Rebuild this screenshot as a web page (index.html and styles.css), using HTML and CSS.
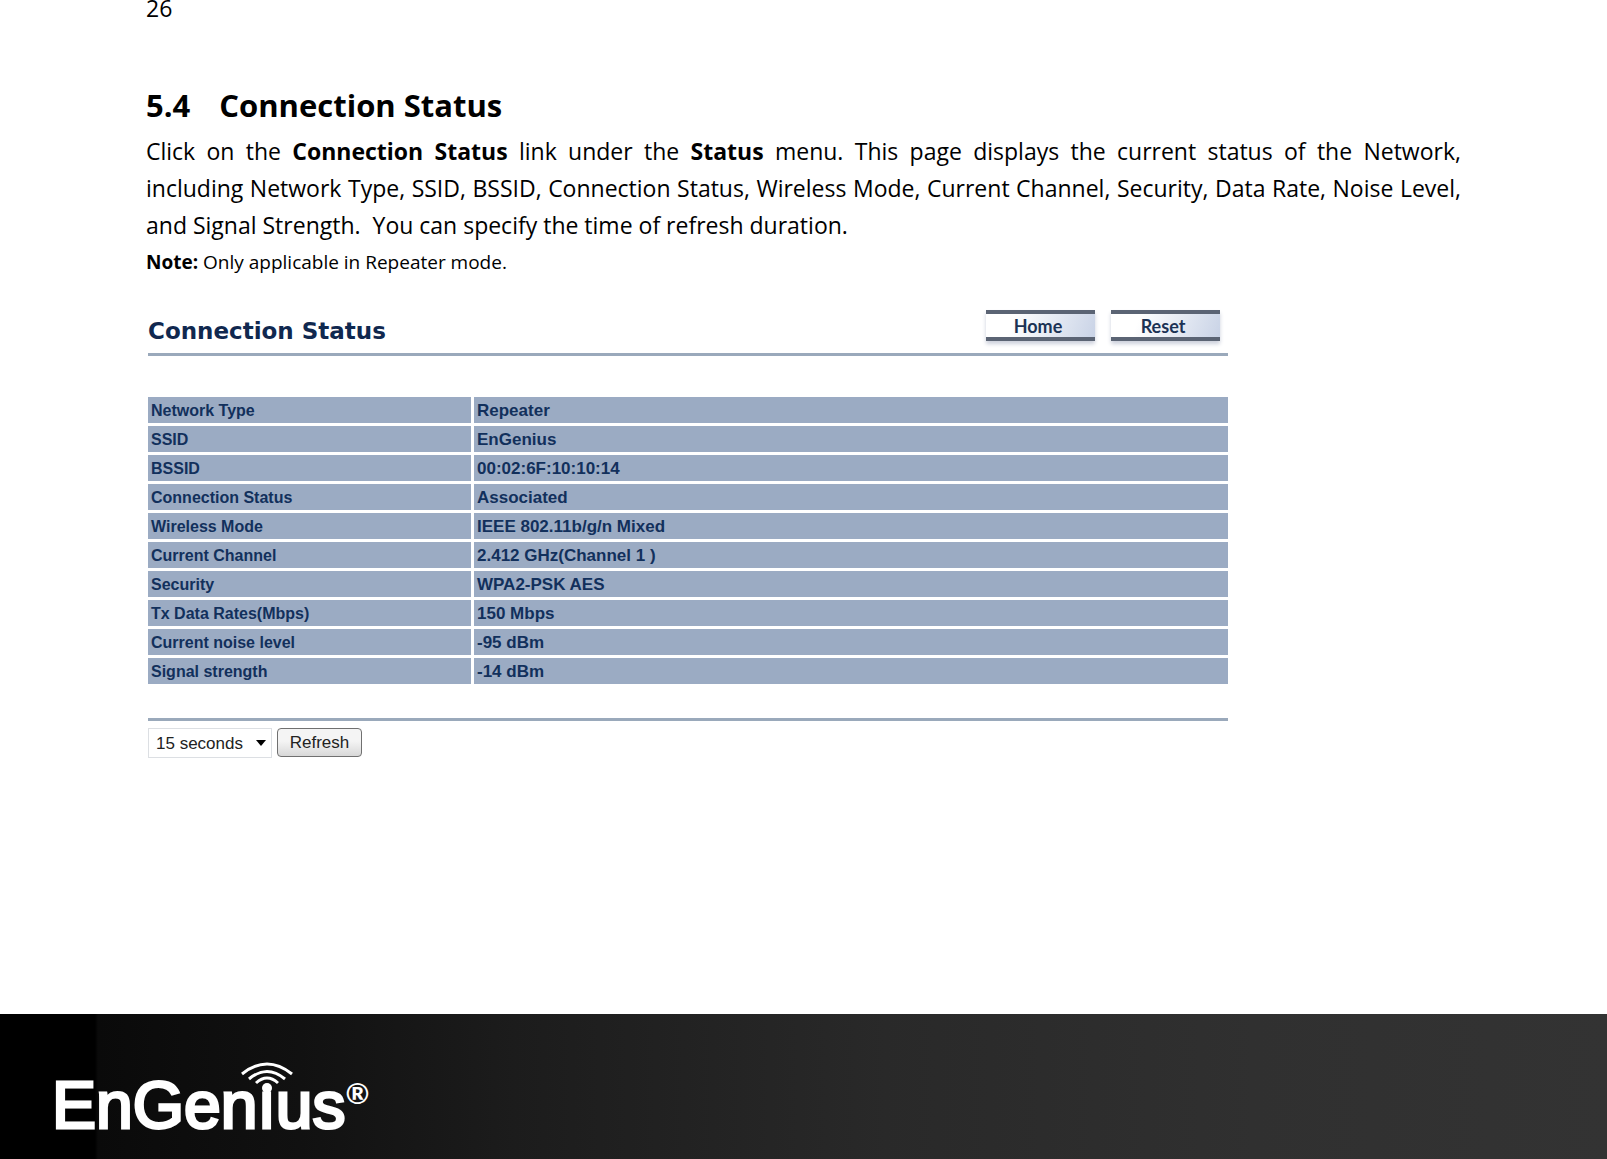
FILE: index.html
```html
<!DOCTYPE html>
<html lang="en">
<head>
<meta charset="utf-8">
<title>5.4 Connection Status</title>
<link rel="stylesheet" href="styles.css">
</head>
<body>
<main class="page">
  <div class="page-number">26</div>
  <h1 class="section-title"><span class="section-number">5.4</span><span>Connection Status</span></h1>
  <p class="intro">Click on the <b>Connection Status</b> link under the <b>Status</b> menu. This page displays the current status of the Network, including Network Type, SSID, BSSID, Connection Status, Wireless Mode, Current Channel, Security, Data Rate, Noise Level, and Signal Strength.&nbsp; You can specify the time of refresh duration.</p>
  <p class="note"><b>Note:</b> Only applicable in Repeater mode.</p>

  <section class="panel">
    <header class="panel-head">
      <h2 class="panel-title">Connection Status</h2>
      <nav class="panel-nav">
        <button class="nav-button" type="button">Home</button>
        <button class="nav-button" type="button">Reset</button>
      </nav>
    </header>
    <table class="status">
      <tbody>
        <tr><th scope="row">Network Type</th><td>Repeater</td></tr>
        <tr><th scope="row">SSID</th><td>EnGenius</td></tr>
        <tr><th scope="row">BSSID</th><td>00:02:6F:10:10:14</td></tr>
        <tr><th scope="row">Connection Status</th><td>Associated</td></tr>
        <tr><th scope="row">Wireless Mode</th><td>IEEE 802.11b/g/n Mixed</td></tr>
        <tr><th scope="row">Current Channel</th><td>2.412 GHz(Channel 1 )</td></tr>
        <tr><th scope="row">Security</th><td>WPA2-PSK AES</td></tr>
        <tr><th scope="row">Tx Data Rates(Mbps)</th><td>150 Mbps</td></tr>
        <tr><th scope="row">Current noise level</th><td>-95 dBm</td></tr>
        <tr><th scope="row">Signal strength</th><td>-14 dBm</td></tr>
      </tbody>
    </table>
    <form class="refresh">
      <span class="select-wrap">
        <select class="interval" aria-label="Refresh interval"><option>15 seconds</option></select>
        <svg class="arrow" viewBox="0 0 10 6" aria-hidden="true"><path d="M0 0H10L5 6Z"/></svg>
      </span>
      <button class="refresh-button" type="button">Refresh</button>
    </form>
  </section>
</main>
<footer class="footer">
  <div class="logo">
    <span class="wordmark">EnGen&#305;us</span>
    <span class="registered">&reg;</span>
    <svg class="signal" viewBox="0 0 54 34" aria-hidden="true">
      <path d="M2 12Q27 -8 52 12M9 17Q27 2 45 17M16 21Q27 11 38 21"/>
      <circle cx="27" cy="26" r="5"/>
    </svg>
  </div>
</footer>
</body>
</html>
```

FILE: styles.css
```css
* { box-sizing: border-box; }

body {
  margin: 0;
  min-height: 100vh;
  display: flex;
  flex-direction: column;
  background: #fff;
  color: #000;
  font-family: "Open Sans", "Noto Sans", sans-serif;
}

.page {
  flex: 1;
  padding: 0 146px 32px;
}

.page-number {
  height: 78px;
  font-size: 23px;
  line-height: 17px;
}

.section-title {
  display: flex;
  gap: 29px;
  margin: 0;
  font-size: 31px;
  line-height: 54px;
}

.intro {
  margin: 0;
  padding-top: 1px;
  font-size: 23px;
  line-height: 37px;
  text-align: justify;
}

.note {
  margin: 0;
  font-size: 19px;
  line-height: 36px;
}

.panel {
  max-width: 1082px;
  margin-top: 28px;
  padding-left: 2px;
  color: #12305c;
  font-family: "Liberation Sans", Arial, sans-serif;
}

.panel-head {
  display: flex;
  justify-content: space-between;
  height: 48px;
  border-bottom: 3px solid #9aa9bb;
}

.panel-title {
  margin: 0;
  color: #10284f;
  font: bold 23px/46px "DejaVu Sans", Verdana, sans-serif;
}

.panel-nav {
  display: flex;
  gap: 16px;
  padding: 2px 8px 0 0;
}

.nav-button {
  width: 109px;
  height: 31px;
  padding: 0 5px 0 0;
  border: solid #5b6474;
  border-width: 4px 0;
  background: linear-gradient(110deg, #fff 25%, #c9d3e6);
  box-shadow: 0 3px 4px #ccd0dc;
  color: #1c3355;
  font: bold 18px/22px Lato, sans-serif;
}

.status {
  width: 100%;
  margin: 41px 0 34px;
  border-collapse: separate;
  border-spacing: 0;
  table-layout: fixed;
}

.status th,
.status td {
  height: 29px;
  padding: 2px 3px 0;
  border-bottom: 3px solid #fff;
  background: #9babc3;
  background-clip: padding-box;
  line-height: 24px;
  font-weight: bold;
  text-align: left;
}

.status tr:last-child > * {
  height: 26px;
  border-bottom: 0;
}

.status th {
  width: 326px;
  border-right: 3px solid #fff;
  font-size: 16px;
}

.status td { font-size: 17px; }

.refresh {
  display: flex;
  gap: 5px;
  padding-top: 7px;
  border-top: 3px solid #9aa9bb;
}

.select-wrap {
  position: relative;
  width: 124px;
}

.interval {
  width: 100%;
  height: 30px;
  padding: 0 7px;
  appearance: none;
  border: 1px solid #dcdfe3;
  background: #fff;
  color: #222;
  font: 17px "Liberation Sans", Arial, sans-serif;
}

.arrow {
  position: absolute;
  top: 12px;
  right: 6px;
  width: 10px;
  height: 6px;
  pointer-events: none;
}

.refresh-button {
  width: 85px;
  height: 29px;
  padding: 0;
  border: 1px solid #707070;
  border-radius: 4px;
  background: linear-gradient(#f4f4f4 45%, #d8d8d8);
  color: #222;
  font: 17px "Liberation Sans", Arial, sans-serif;
}

.footer {
  height: 145px;
  padding: 42px 52px;
  background: linear-gradient(90deg, #000 0 95px, #0a0a0a 98px, #111 300px, #1c1c1c 32%, #292929 55%, #303030 78%, #333);
}

.logo {
  position: relative;
  display: flex;
  width: 320px;
  color: #fff;
}

.wordmark {
  font: 66px/99px "Liberation Sans", Arial, sans-serif;
  -webkit-text-stroke: 3px #fff;
}

.registered {
  margin-top: 22px;
  font: bold 29px/29px Lato, sans-serif;
}

.signal {
  position: absolute;
  top: 6px;
  left: 188px;
  width: 54px;
  height: 34px;
  fill: #fff;
}

.signal path {
  fill: none;
  stroke: #fff;
  stroke-width: 3;
}
```
